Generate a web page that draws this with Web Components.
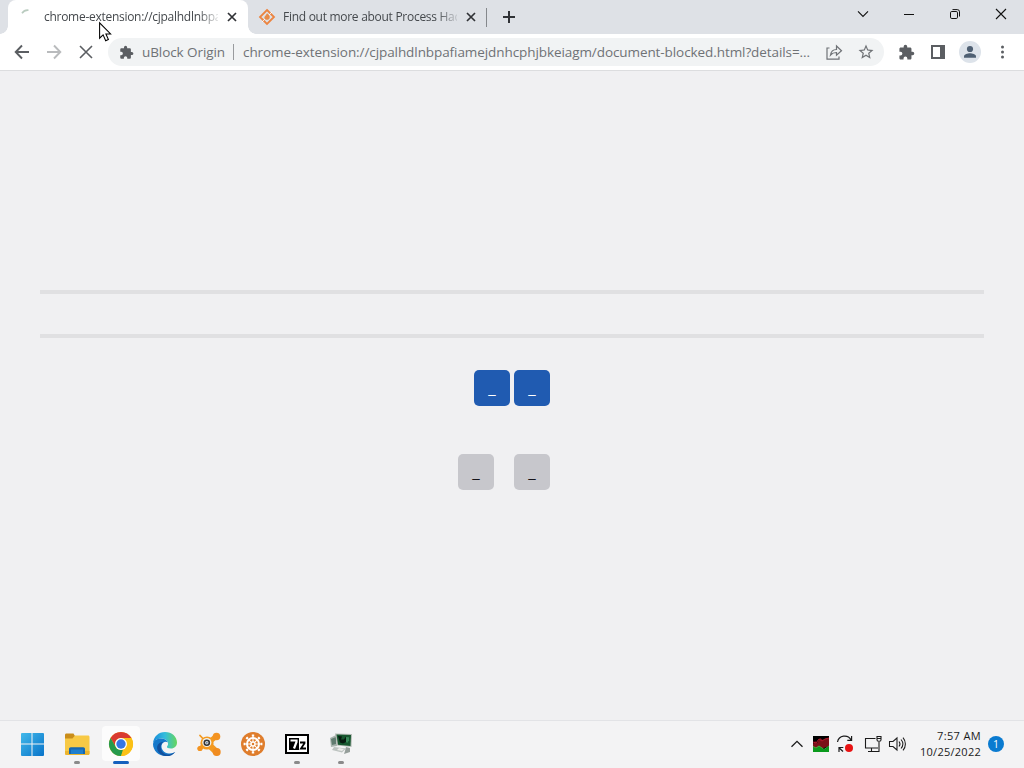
<!DOCTYPE html>
<html lang="en">
<head>
<meta charset="utf-8">
<title>uBlock Origin</title>
<style>
html, body { margin: 0; height: 100%; overflow: hidden; }
body { font-family: "Open Sans", "Noto Sans", sans-serif; }
</style>
</head>
<body>
<desktop-screen></desktop-screen>
<script>
// icon name -> [viewBox size, svg content]
const icons = {
    back: [16, '<path d="M15 8H2M8 1.5 1.7 8 8 14.5" fill="none" stroke="currentColor" stroke-width="1.9"/>'],
    forward: [16, '<path d="M1 8h13M8 1.5 14.3 8 8 14.5" fill="none" stroke="currentColor" stroke-width="1.9"/>'],
    stop: [16, '<path d="m2 2 12 12M14 2 2 14" fill="none" stroke="currentColor" stroke-width="1.6"/>'],
    puzzle: [24, '<path fill="currentColor" d="M20.5 11H19V7c0-1.1-.9-2-2-2h-4V3.5a2.5 2.5 0 0 0-5 0V5H4c-1.1 0-2 .9-2 2v3.8h1.5a2.7 2.7 0 0 1 0 5.4H2V20c0 1.1.9 2 2 2h3.8v-1.5a2.7 2.7 0 0 1 5.4 0V22H17c1.1 0 2-.9 2-2v-4h1.5a2.5 2.5 0 0 0 0-5z"/>'],
    share: [18, '<path d="M4.5 5H2v11.2h12v-2.7M5.500 12C6 8.500 8 6.600 11.500 6.500V3l5 4.700-5 4.500V9.500C8.500 9.500 7 10.200 5.500 12z" fill="none" stroke="currentColor" stroke-width="1.2"/>'],
    star: [24, '<path fill="currentColor" d="m22 9.240-7.190-.62L12 2 9.190 8.630 2 9.240l5.460 4.730L5.820 21 12 17.270 18.180 21l-1.630-7.030L22 9.240zM12 15.400l-3.760 2.270 1-4.280-3.320-2.880 4.380-.38L12 6.100l1.710 4.040 4.380.38-3.320 2.880 1 4.280L12 15.400z"/>'],
    panel: [14, '<path fill="currentColor" fill-rule="evenodd" d="M0 0h14v14H0zM2 2v10h7V2z"/>'],
    avatar: [22, '<circle cx="11" cy="11" r="11" fill="#dde3ea"/><circle cx="11" cy="8" r="3.1" fill="#4f6073"/><path d="M5 16.800v-1.500c0-2.100 3.800-3.100 6-3.100s6 1 6 3.100v1.500z" fill="#4f6073"/>'],
    dots: [16, '<g fill="currentColor"><circle cx="8.5" cy="3" r="1.5"/><circle cx="8.5" cy="8" r="1.5"/><circle cx="8.5" cy="13" r="1.5"/></g>'],
    tabclose: [10, '<path d="m1 1 8 8M9 1 1 9" fill="none" stroke="currentColor" stroke-width="1.7"/>'],
    plus: [12, '<path d="M6 0v12M0 6h12" fill="none" stroke="currentColor" stroke-width="2"/>'],
    spinner: [16, '<path d="M2 4.2A7 7 0 0 1 8.5 1.2" fill="none" stroke="#b9cbbf" stroke-width="1.6"/>'],
    sourceforge: [16, '<path d="m8 1 7 7-7 7-7-7z" fill="none" stroke="#ec8440" stroke-width="1.8"/><path d="M8 4.300c3 2.200 3.200 3.500 2.500 5.200-.8 1.800-4.200 1.800-5 0C4.900 7.500 7 6.600 8 4.300z" fill="#e88b48"/><path d="m3 13 3-3M10 6l3-3" stroke="#fff" stroke-width=".8"/>'],
    chevron: [12, '<path d="m1 3.300 5 5.200 5-5.200" fill="none" stroke="currentColor" stroke-width="1.1"/>'],
    caret: [12, '<path d="M.5 8.700 6 3.300l5.500 5.400" fill="none" stroke="currentColor" stroke-width="1.3"/>'],
    minimize: [10, '<path d="M0 5.500h10" stroke="currentColor"/>'],
    restore: [10, '<rect x=".5" y="2.5" width="7" height="7" rx="1.3" fill="none" stroke="currentColor"/><path d="M2.500.6h4.800a2.200 2.200 0 0 1 2.200 2.200v4.700" fill="none" stroke="currentColor"/>'],
    close: [10, '<path d="m0 0 10 10M10 0 0 10" fill="none" stroke="currentColor" stroke-width="1.1"/>'],
    windows: [24, '<defs><linearGradient id="w" x1="0" y1="0" x2="1" y2="1" gradientUnits="objectBoundingBox"><stop stop-color="#42b9ea"/><stop offset="1" stop-color="#0873c9"/></linearGradient></defs><path fill="url(#w)" d="M1 2a1 1 0 0 1 1-1h9.500v10.500H1zM12.500 1H23a1 1 0 0 1 1 1v9.500H12.500zM1 12.500h10.500V24H2a1 1 0 0 1-1-1zM12.500 12.500H24V23a1 1 0 0 1-1 1H12.500z"/>'],
    folder: [26, '<path d="M1 4c0-1 .6-1.500 1.500-1.500h7L11 5v5H1z" fill="#c98d1a"/><path d="M1 7.500h7.500L11 4.500h13c1 0 1.500.6 1.500 1.500v16.500c0 .8-.6 1.500-1.500 1.500H2.500C1.600 24 1 23.300 1 22.500z" fill="#f7c945"/><path d="M1 20h24.500v2.500c0 .9-.6 1.500-1.500 1.500H2.500C1.600 24 1 23.400 1 22.500z" fill="#edb52f"/><path d="M5 23v-5c0-1 .8-1.700 1.700-1.700h12.600c1 0 1.700.7 1.700 1.700v5z" fill="#1667b0"/><path d="M7 18.500h12V23H7z" fill="#1f7fcd"/>'],
    chrome: [24, '<circle cx="12" cy="12" r="12" fill="#fbc116"/><path d="M1.600 6a12 12 0 0 1 20.800 0H12a6 6 0 0 0-5.200 9z" fill="#d93a30"/><path d="M1.600 6 6.800 15c1 1.800 3 3 5.200 3 .7 0 1.300-.1 1.900-.3L12 24A12 12 0 0 1 1.600 6z" fill="#269a4c"/><path d="M22.400 6A12 12 0 0 1 12 24l5.200-9A6 6 0 0 0 12 6z" fill="#fbc116"/><circle cx="12" cy="12" r="6" fill="#fff"/><circle cx="12" cy="12" r="4.7" fill="#3576e3"/>'],
    edge: [24, '<defs><linearGradient id="e" x1="0" x2="1"><stop stop-color="#188bdb"/><stop offset=".5" stop-color="#34bddc"/><stop offset="1" stop-color="#65d65b"/></linearGradient></defs><path d="M0 11.500C.5 4.500 5.500 0 12 0c7 0 12 4.800 12 10.500 0 3.500-2.500 6-6 6-3 0-4.500-1-4-2 .8-1 1.200-2 1-3.300C14.500 7.800 11 6.500 8 6.500 4 6.500 1 8.700 0 11.500z" fill="url(#e)"/><path d="M0 12c.5-3.500 3.800-5.800 7.800-5.600 3.400 0 6.200 1.600 7 3.900-2-1.300-5.800-.3-6.300 3.500-.4 4 3.300 8.300 8.200 7.700 2.500-.2 4-.9 5.500-1.600C20 22.500 16.500 24 12.500 24 5.500 24 0 18.500 0 12z" fill="#1679cb"/><path d="M11 9.800C6.500 11.500 7 18 10.500 21c3 2.500 7.500 1.800 11.700-1.100C18 26 7.500 25.500 4.500 18 3 13.500 6 9.700 11 9.800z" fill="#12519e"/>'],
    avast: [24, '<g stroke="#f39a21" fill="none" stroke-linecap="round"><path d="m10.500 11.500 8.500-7" stroke-width="5"/><path d="m10.500 11.500 9 8.500" stroke-width="6.500"/><path d="M10.500 11.500 2.500 16.500" stroke-width="4"/><path d="M10.500 11.500 3 3.500" stroke-width="1.8"/></g><circle cx="19.500" cy="4.500" r="3.800" fill="#f39321"/><circle cx="19.700" cy="20" r="4" fill="#f08c20"/><circle cx="3" cy="16.500" r="2.600" fill="#f39321"/><circle cx="10" cy="11" r="6.600" fill="#f39a21"/><circle cx="9.800" cy="10.500" r="4.600" fill="#f4f1e8"/><circle cx="9.800" cy="10.800" r="2.500" fill="none" stroke="#303438" stroke-width="1.6"/><circle cx="9.800" cy="10.800" r="1" fill="#6a87a5"/>'],
    wheel: [24, '<circle cx="12" cy="12" r="12" fill="#df7d2c"/><g fill="none" stroke="#fff"><circle cx="12" cy="12" r="6" stroke-width="2"/><circle cx="12" cy="12" r="2" stroke-width="1.5"/><path d="M12 3v7M12 14v7M3 12h7M14 12h7M5.600 5.600l5 5M13.400 13.400l5 5M18.400 5.600l-5 5M10.600 13.400l-5 5" stroke-width="1.1"/><path d="M10.800 3.500h2.400M10.800 20.500h2.400M3.500 10.800v2.400M20.500 10.800v2.400M5.200 6.800l1.600-1.600M17.200 5.200l1.600 1.600M5.200 17.200l1.600 1.600M17.200 18.800l1.600-1.600" stroke-width="1.8"/></g>'],
    sevenzip: [24, '<rect x="1" y="3" width="22" height="18" fill="#fff" stroke="#000" stroke-width="2"/><path d="M4 6h10v12H4z"/><path d="M5.500 8.500h6v1.500L9 16.500" fill="none" stroke="#fff" stroke-width="2.2"/><path d="M15 10.500h4.500v.8L16 16.500h5" fill="none" stroke="#000" stroke-width="1.8"/>'],
    hacker: [24, '<path d="m1 6 6-3 1 11-6 1z" fill="#a9b4ae"/><path d="m2 7 5-2v7l-4 1z" fill="#617c70"/><path d="m6 1.500 17 .5-.5 13-14.500-1.500z" fill="#b5bbb6"/><path d="m7.500 2.500 14.500.4-.5 11.100L9 12.800z" fill="#17572f"/><path d="m9 4 4 .5-1 3h3l2-3 1 5-4 2-3-1z" fill="#06190f"/><path d="m17 5 3 .3v3l-2 3-1-2z" fill="#378858"/><path d="m5 15 12 1.500-4 4L3 18z" fill="#bcc3c0"/><path d="m17 15 4 1v4l-6 2 1-3z" fill="#959e9a"/><path d="m10 16 5 1-2 2-5-1z" fill="#ececea"/>'],
    cpu: [16, '<path d="M0 0h16v16H0z"/><path d="M0 16V8l2-3 2 2 3-5 3 2 2-1 4-1v8z" fill="#7b1018"/><path d="m0 6 3 1 3-4 3 2 3-2 4-1" fill="none" stroke="#b3182b"/><path d="M0 16v-5l3 1.500 3-2 3 2 2 1.500 5-3.500V16z" fill="#0a9a1c"/><path d="m0 10.500 3 1.500 3-2 3 2 2 1.500 5-3.500" fill="none" stroke="#3c4" stroke-width=".9"/>'],
    sync: [18, '<path d="M1.500 7A7.300 7.300 0 0 1 15 4.800M15.600 1v4.300h-4.300M3 17v-4.500h4.300M3 12.700l4 3.800" fill="none" stroke="#1b1b1b" stroke-width="1.2"/><circle cx="13" cy="13" r="4" fill="#e81313"/>'],
    network: [18, '<path d="M11.500 3.500H1.500v9.500H14M4 16.500h11V7M7.500 13v3.500" fill="none" stroke="#1b1b1b" stroke-width="1.1"/><path d="M13 1.500h4v3.300c0 .8-.7 1.500-1.500 1.500h-1c-.8 0-1.500-.7-1.500-1.500zM13 3.500h4" fill="none" stroke="#1b1b1b" stroke-width="1.1"/>'],
    sound: [18, '<path d="M1.500 6.500H5L9 3v12l-4-3.500H1.500zM11 6.500c1.200 1.500 1.200 3.500 0 5M13 4.500c2.300 2.700 2.300 6.300 0 9M15 2.600c3.200 3.800 3.200 9 0 12.800" fill="none" stroke="#1b1b1b" stroke-width="1.05"/>'],
    cursor: [20, '<path d="M.6.800v15.400l3.500-3.300 2.600 5.800 2.700-1.200-2.500-5.600h4.700z" fill="#fff" stroke="#000" stroke-width="1.05"/>']
};

class UiIcon extends HTMLElement {
    constructor() {
        super();
        this.attachShadow({ mode: 'open' });
    }

    connectedCallback() {
        const [box, content] = icons[this.getAttribute('name')];
        const size = this.getAttribute('size') || box;
        this.shadowRoot.innerHTML = `
        <style>
        :host { display: block; flex: none; width: ${size}px; height: ${size}px; }
        svg { display: block; overflow: visible; }
        </style>
        <svg width="${size}" height="${size}" viewBox="0 0 ${box} ${box}">${content}</svg>`;
    }
}
customElements.define('ui-icon', UiIcon);

// single line of text, letter spacing adjusted so the line takes the given width
class TextLine extends HTMLElement {
    constructor() {
        super();
        this.attachShadow({ mode: 'open' }).innerHTML = `
        <style>
        :host { display: block; white-space: nowrap; flex: none; }
        span { display: inline-block; }
        </style>
        <span><slot></slot></span>`;
    }

    connectedCallback() {
        const span = this.shadowRoot.querySelector('span');
        const wanted = Number(this.getAttribute('width'));
        const natural = span.getBoundingClientRect().width;
        const count = this.textContent.length;
        if (wanted && natural) span.style.letterSpacing = `${(wanted - natural) / count}px`;
    }
}

class BrowserTab extends HTMLElement {
    constructor() {
        super();
        this.attachShadow({ mode: 'open' }).innerHTML = `
        <style>
        :host { display: flex; align-items: center; box-sizing: border-box; width: 239px; height: 34px; padding-left: 11px; font-size: 12px; color: #45494d; }
        :host([active]) { position: relative; width: 240px; padding-left: 12px; background: #fff; border-radius: 8px 8px 0 0; }
        /* curved feet of the active tab */
        :host([active])::before, :host([active])::after { content: ""; position: absolute; bottom: 0; width: 8px; height: 8px; }
        :host([active])::before { left: -8px; background: radial-gradient(circle at 0 0, transparent 7.5px, #fff 8px); }
        :host([active])::after { right: -8px; background: radial-gradient(circle at 100% 0, transparent 7.5px, #fff 8px); }
        .title { width: 174px; margin-left: 8px; overflow: hidden; line-height: 18px;
            -webkit-mask-image: linear-gradient(90deg, #000 154px, transparent 178px); mask-image: linear-gradient(90deg, #000 154px, transparent 178px); }
        .x { margin-left: 9px; color: #303236; }
        </style>
        <slot name="icon"></slot>
        <div class="title"><slot></slot></div>
        <ui-icon class="x" name="tabclose"></ui-icon>`;
    }
}
customElements.define('browser-tab', BrowserTab);

class TabStrip extends HTMLElement {
    constructor() {
        super();
        this.attachShadow({ mode: 'open' }).innerHTML = `
        <style>
        :host { display: flex; height: 34px; background: #dee1e6; padding-left: 8px; box-sizing: border-box; }
        .divider { width: 1px; height: 19px; margin: 8px 0 0 -1px; background: #85888c; }
        .plus { margin: 11px 0 0 16px; color: #303236; }
        .window { display: flex; margin-left: auto; height: 28px; color: #111; }
        .window div { width: 46px; display: flex; align-items: center; justify-content: center; }
        </style>
        <browser-tab active><ui-icon slot="icon" name="spinner"></ui-icon><text-line width="181">chrome-extension://cjpalhdlnbpaf</text-line></browser-tab>
        <browser-tab><ui-icon slot="icon" name="sourceforge"></ui-icon><text-line width="183">Find out more about Process Hack</text-line></browser-tab>
        <div class="divider"></div>
        <ui-icon class="plus" name="plus"></ui-icon>
        <div class="window">
            <div><ui-icon name="chevron"></ui-icon></div>
            <div><ui-icon name="minimize"></ui-icon></div>
            <div><ui-icon name="restore"></ui-icon></div>
            <div><ui-icon name="close"></ui-icon></div>
        </div>`;
    }
}
customElements.define('tab-strip', TabStrip);

class BrowserToolbar extends HTMLElement {
    constructor() {
        super();
        this.attachShadow({ mode: 'open' }).innerHTML = `
        <style>
        :host { display: flex; align-items: center; height: 37px; padding: 0 6px; box-sizing: border-box; background: #fff; border-bottom: 1px solid #dcdddf; color: #5b5e62; }
        .btn { width: 32px; height: 32px; display: flex; align-items: center; justify-content: center; }
        .off { color: #b9bbbd; }
        .bar { flex: 1; display: flex; align-items: center; height: 28px; margin: 0 6px; padding: 0 2px 0 11px; box-sizing: border-box; border-radius: 14px; background: #f1f3f4; font-size: 13.5px; line-height: 20px; color: #6f7276; }
        .name { margin-left: 8px; }
        .sep { width: 1px; height: 16px; margin: 0 9px 0 8px; background: #999b9e; }
        .url { margin-right: auto; }
        </style>
        <div class="btn"><ui-icon name="back"></ui-icon></div>
        <div class="btn off"><ui-icon name="forward"></ui-icon></div>
        <div class="btn"><ui-icon name="stop"></ui-icon></div>
        <div class="bar">
            <ui-icon name="puzzle" size="15" style="color:#5b5e62"></ui-icon>
            <text-line class="name" width="83">uBlock Origin</text-line>
            <div class="sep"></div>
            <text-line class="url" width="567">chrome-extension://cjpalhdlnbpafiamejdnhcphjbkeiagm/document-blocked.html?details=...</text-line>
            <div class="btn"><ui-icon name="share"></ui-icon></div>
            <div class="btn"><ui-icon name="star" size="18"></ui-icon></div>
        </div>
        <div class="btn"><ui-icon name="puzzle" size="17"></ui-icon></div>
        <div class="btn"><ui-icon name="panel"></ui-icon></div>
        <div class="btn"><ui-icon name="avatar"></ui-icon></div>
        <div class="btn"><ui-icon name="dots"></ui-icon></div>`;
    }
}
customElements.define('browser-toolbar', BrowserToolbar);

class PageButton extends HTMLElement {
    constructor() {
        super();
        this.attachShadow({ mode: 'open' }).innerHTML = `
        <style>
        :host { display: block; }
        button { display: block; width: 36px; height: 36px; padding: 0; border: 0; border-radius: 5px; background: #c7c7cc; color: #15141a; font: 17px/36px "Open Sans", sans-serif; }
        :host([primary]) button { background: #205bb1; color: #fff; }
        </style>
        <button><slot></slot></button>`;
    }
}
customElements.define('page-button', PageButton);

class BlockedPage extends HTMLElement {
    constructor() {
        super();
        this.attachShadow({ mode: 'open' }).innerHTML = `
        <style>
        :host { display: block; flex: 1; padding: 219px 40px 0; box-sizing: border-box; background: #f0f0f2; }
        .rule { height: 4px; margin-bottom: 40px; background: #e0e0e2; }
        .row { display: flex; justify-content: center; gap: 4px; margin-top: 48px; }
        .first { margin-top: -8px; }
        .second { gap: 20px; padding-right: 16px; }
        </style>
        <div class="rule"></div>
        <div class="rule"></div>
        <div class="row first"><page-button primary>_</page-button><page-button primary>_</page-button></div>
        <div class="row second"><page-button>_</page-button><page-button>_</page-button></div>`;
    }
}
customElements.define('blocked-page', BlockedPage);

class TaskItem extends HTMLElement {
    constructor() {
        super();
        this.attachShadow({ mode: 'open' }).innerHTML = `
        <style>
        :host { display: flex; flex-direction: column; align-items: center; width: 44px; height: 47px; }
        .cell { display: flex; align-items: center; justify-content: center; width: 38px; height: 35px; margin-top: 5px; border-radius: 4px; }
        .mark { width: 6px; height: 3px; border-radius: 2px; background: transparent; }
        :host([open]) .mark { background: #8a8a8a; }
        :host([active]) .cell { background: #fcfcfc; }
        :host([active]) .mark { width: 16px; background: #1560bd; }
        </style>
        <div class="cell"><slot></slot></div>
        <div class="mark"></div>`;
    }
}
customElements.define('task-item', TaskItem);

class TaskBar extends HTMLElement {
    constructor() {
        super();
        this.attachShadow({ mode: 'open' }).innerHTML = `
        <style>
        :host { display: flex; height: 48px; padding-left: 10px; box-sizing: border-box; background: #f3f3f4; border-top: 1px solid #e2e3e6; color: #1b1b1b; }
        .start { margin-right: 1px; }
        .tray { display: flex; align-items: center; margin-left: auto; padding: 0 20px 2px 0; }
        .clock { display: flex; flex-direction: column; align-items: flex-end; width: 75px; font-size: 11px; line-height: 16px; }
        .badge { width: 16px; height: 16px; margin-left: 7px; border-radius: 50%; background: #0a7bd0; color: #fff; font-size: 10.5px; line-height: 16px; text-align: center; }
        </style>
        <task-item class="start"><ui-icon name="windows"></ui-icon></task-item>
        <task-item open><ui-icon name="folder"></ui-icon></task-item>
        <task-item active><ui-icon name="chrome"></ui-icon></task-item>
        <task-item><ui-icon name="edge"></ui-icon></task-item>
        <task-item><ui-icon name="avast"></ui-icon></task-item>
        <task-item><ui-icon name="wheel"></ui-icon></task-item>
        <task-item open><ui-icon name="sevenzip"></ui-icon></task-item>
        <task-item open><ui-icon name="hacker"></ui-icon></task-item>
        <div class="tray">
            <ui-icon name="caret"></ui-icon>
            <ui-icon name="cpu" style="margin-left:10px"></ui-icon>
            <ui-icon name="sync" style="margin-left:7px"></ui-icon>
            <ui-icon name="network" style="margin-left:10px"></ui-icon>
            <ui-icon name="sound" style="margin-left:6px"></ui-icon>
            <div class="clock"><text-line width="44">7:57 AM</text-line><text-line width="61">10/25/2022</text-line></div>
            <div class="badge">1</div>
        </div>`;
    }
}
customElements.define('task-bar', TaskBar);

class DesktopScreen extends HTMLElement {
    constructor() {
        super();
        this.attachShadow({ mode: 'open' }).innerHTML = `
        <style>
        :host { display: flex; flex-direction: column; width: 1024px; height: 768px; overflow: hidden; position: relative; }
        .pointer { position: absolute; left: 99px; top: 22px; }
        </style>
        <tab-strip></tab-strip>
        <browser-toolbar></browser-toolbar>
        <blocked-page></blocked-page>
        <task-bar></task-bar>
        <ui-icon class="pointer" name="cursor"></ui-icon>`;
    }
}
customElements.define('desktop-screen', DesktopScreen);

// last, so every line is already in the page when it is measured
customElements.define('text-line', TextLine);
</script>
</body>
</html>
